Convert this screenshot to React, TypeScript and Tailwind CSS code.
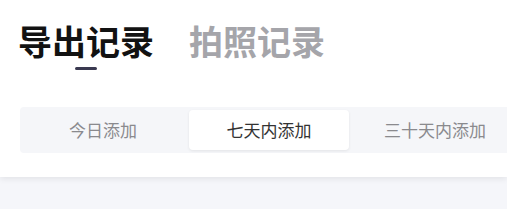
import { useState } from "react";

const ranges = ["今日添加", "七天内添加", "三十天内添加"];

export default function App() {
  const [tab, setTab] = useState(0);
  const [range, setRange] = useState(1);

  return (
    <div
      className="h-[209px] w-[507px] overflow-hidden bg-[#f5f6fa]"
      style={{ fontFamily: '"Noto Sans CJK SC", "Noto Sans", sans-serif' }}
    >
      <div className="relative bg-white pb-6 shadow-[0_2px_6px_rgba(0,0,0,0.08)]">
        <div className="flex gap-[35px] pl-[18px] pt-[21px]">
          {["导出记录", "拍照记录"].map((t, i) => (
            <button
              key={t}
              onClick={() => setTab(i)}
              className={`relative pb-[9px] text-[34px] font-bold leading-[40px] ${
                tab === i ? "text-[#121212]" : "text-[#a5a5aa]"
              }`}
            >
              {t}
              {tab === i && (
                <span className="absolute bottom-0 left-1/2 h-[3px] w-[22px] -translate-x-1/2 rounded-full bg-[#3a3950]" />
              )}
            </button>
          ))}
        </div>

        <div className="ml-[20px] mt-[37px] flex gap-[6px] rounded-l-[4px] bg-[#f5f6f9] p-[3px]">
          {ranges.map((r, i) => (
            <button
              key={r}
              onClick={() => setRange(i)}
              className={`h-[40px] w-[160px] shrink-0 rounded-[4px] text-[17px] ${
                range === i
                  ? "bg-white text-[#333333] shadow-[0_1px_3px_rgba(0,0,0,0.08)]"
                  : "text-[#8a8a8e]"
              }`}
            >
              {r}
            </button>
          ))}
        </div>
      </div>
    </div>
  );
}
